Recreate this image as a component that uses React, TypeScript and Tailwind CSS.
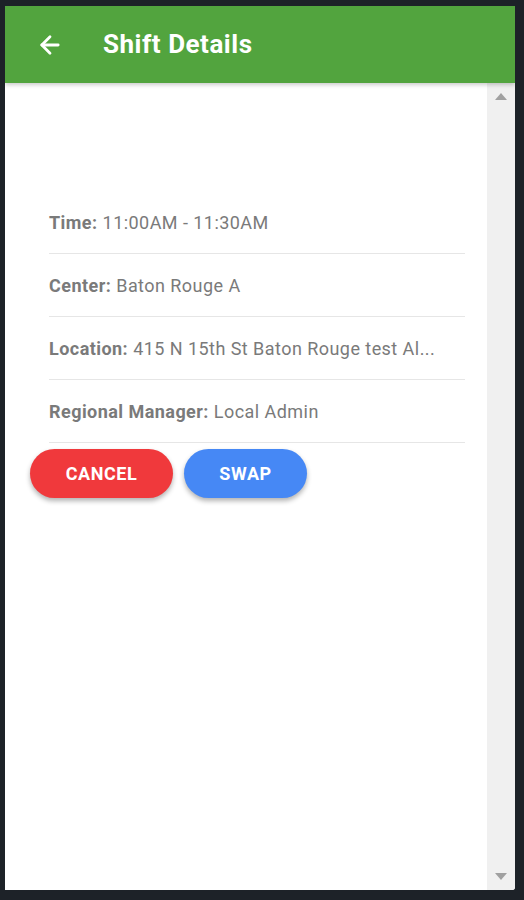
import { ArrowLeft } from "lucide-react";

const rows = [
  { label: "Time:", value: "11:00AM - 11:30AM" },
  { label: "Center:", value: "Baton Rouge A" },
  { label: "Location:", value: "415 N 15th St Baton Rouge test Al..." },
  { label: "Regional Manager:", value: "Local Admin" },
];

export default function App() {
  return (
    <div className="h-[900px] w-[524px] bg-[#1d2228] pt-[6px] pl-[5px] pr-[9px] pb-[10px] font-['Roboto',sans-serif]">
      <div className="flex h-full flex-col bg-white rounded-br-[3px] overflow-hidden">
        <header className="relative z-10 flex h-[77px] shrink-0 items-center bg-[#52a43e] shadow-[0_2px_4px_rgba(0,0,0,0.2)]">
          <ArrowLeft size={28} strokeWidth={2.4} className="ml-[31px] text-white" />
          <h1 className="ml-[39px] text-[26px] font-bold tracking-[0.02em] text-white">Shift Details</h1>
        </header>
        <div className="flex flex-1">
          <main className="flex-1 pt-[108px]">
            <div className="ml-[44px] mr-[22px]">
              {rows.map((r) => (
                <div key={r.label} className="flex h-[63px] items-center border-b border-[#e6e6e6] text-[18px] tracking-[0.025em] text-[#7a7a7a]">
                  <span className="font-bold">{r.label}</span>
                  <span className="ml-[5px]">{r.value}</span>
                </div>
              ))}
            </div>
            <div className="mt-[6px] ml-[25px] flex gap-[11px]">
              <button className="h-[49px] w-[143px] rounded-full bg-[#f0393c] text-[18px] font-bold tracking-[0.03em] text-white shadow-[0_3px_5px_rgba(0,0,0,0.3)]">
                CANCEL
              </button>
              <button className="h-[49px] w-[123px] rounded-full bg-[#4688f5] text-[18px] font-bold tracking-[0.03em] text-white shadow-[0_3px_5px_rgba(0,0,0,0.3)]">
                SWAP
              </button>
            </div>
          </main>
          <div className="flex w-[28px] flex-col items-center justify-between bg-[#f0f0f0] py-[10px]">
            <div className="h-0 w-0 border-x-[6px] border-b-[7px] border-x-transparent border-b-[#a0a0a0]" />
            <div className="h-0 w-0 border-x-[6px] border-t-[7px] border-x-transparent border-t-[#a0a0a0]" />
          </div>
        </div>
      </div>
    </div>
  );
}
